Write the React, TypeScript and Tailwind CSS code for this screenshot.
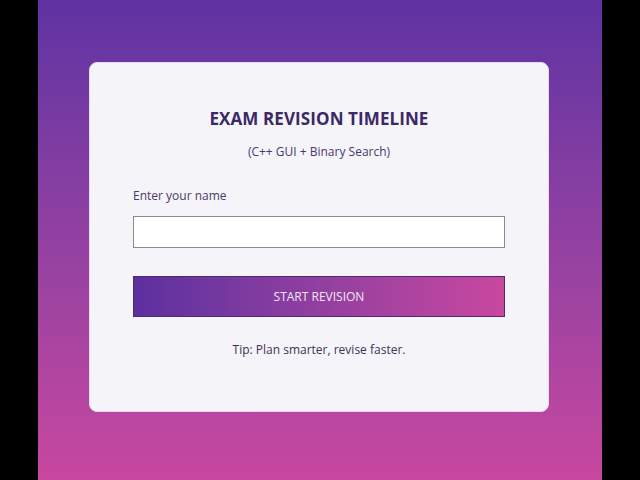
export default function App() {
  return (
    <div className="w-[640px] h-[480px] bg-black flex justify-center overflow-hidden" style={{ fontFamily: '"Open Sans", "Noto Sans", sans-serif' }}>
      <div className="w-[564px] h-[480px] bg-gradient-to-b from-[#5f32a2] to-[#c8479f] pt-[62px] flex flex-col items-center">
        <div className="mr-[2px] w-[460px] h-[350px] bg-[#f5f4f8] rounded-[8px] border border-[#e8d8f0] flex flex-col items-center pt-[44px] px-[43px]">
          <h1 className="text-[17px] leading-[24px] font-bold text-[#3b2866] tracking-[0.1px]">EXAM REVISION TIMELINE</h1>
          <p className="mt-[13px] text-[12px] leading-[16px] text-[#4a3670]">(C++ GUI + Binary Search)</p>
          <label className="self-start mt-[28px] text-[12px] leading-[16px] text-[#4b3a68]">Enter your name</label>
          <input className="mt-[12px] w-full h-[32px] bg-white border border-[#8a8a8a] outline-none" />
          <button className="mt-[28px] w-full h-[41px] bg-gradient-to-r from-[#5d2f9f] to-[#c9479f] border border-[#4e2a72] text-[12px] text-[#f3e6f4]">START REVISION</button>
          <p className="mt-[25px] text-[12px] leading-[16px] text-[#3e3156]">Tip: Plan smarter, revise faster.</p>
        </div>
      </div>
    </div>
  );
}
